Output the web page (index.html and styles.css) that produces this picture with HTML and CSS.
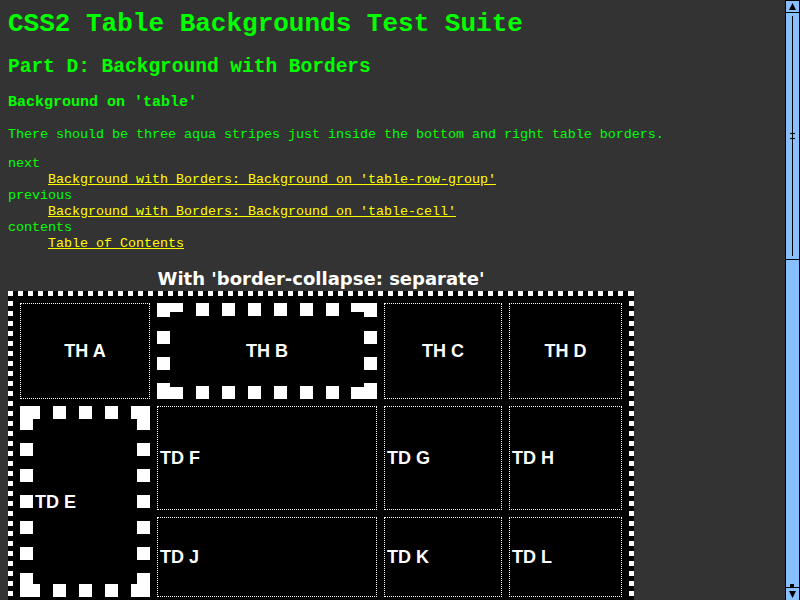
FILE: index.html
```html
<!DOCTYPE html>
<html lang="en">
<head>
<meta charset="utf-8">
<title>CSS2 Table Backgrounds Test Suite: Part D: Background on 'table'</title>
<link rel="stylesheet" href="styles.css">
</head>
<body>
<h1>CSS2 Table Backgrounds Test Suite</h1>
<h2>Part D: Background with Borders</h2>
<h3>Background on 'table'</h3>
<p class="note">There should be three aqua stripes just inside the bottom and right table borders.</p>
<dl class="nav">
  <dt>next</dt>
  <dd><a href="#">Background with Borders: Background on 'table-row-group'</a></dd>
  <dt>previous</dt>
  <dd><a href="#">Background with Borders: Background on 'table-cell'</a></dd>
  <dt>contents</dt>
  <dd><a href="#">Table of Contents</a></dd>
</dl>
<div class="test">
  <div class="caption">With 'border-collapse: separate'</div>
  <div class="grid">
    <div class="cell th">TH A</div>
    <div class="cell th thick-b">TH B</div>
    <div class="cell th">TH C</div>
    <div class="cell th">TH D</div>
    <div class="cell td thick-e">TD E</div>
    <div class="cell td">TD F</div>
    <div class="cell td">TD G</div>
    <div class="cell td">TD H</div>
    <div class="cell td">TD J</div>
    <div class="cell td">TD K</div>
    <div class="cell td">TD L</div>
  </div>
</div>
<div class="scrollbar" aria-hidden="true">
  <div class="sb-btn sb-up"><svg width="13" height="11" viewBox="0 0 13 11"><path d="M6.5 2 L10 9 H3 Z" fill="#000"/></svg></div>
  <div class="sb-thumb"></div>
  <div class="sb-track"></div>
  <div class="sb-btn sb-down"><svg width="13" height="11" viewBox="0 0 13 11"><path d="M3 2 H10 L6.5 9 Z" fill="#000"/></svg></div>
</div>
</body>
</html>
```
FILE: styles.css
```css
html {
  overflow: hidden;
  background: #333333;
}

body {
  margin: 0;
  padding: 9px 8px 0;
  background: #333333;
  color: #00ff00;
  font-family: "Liberation Mono", "Courier New", monospace;
  font-size: 13.33px;
  line-height: 16px;
}

h1 {
  margin: 0;
  font-size: 26px;
  line-height: 30px;
  font-weight: bold;
}

h2 {
  margin: 16px 0 0;
  font-size: 19.5px;
  line-height: 24px;
  font-weight: bold;
}

h3 {
  margin: 15px 0 0;
  font-size: 15px;
  line-height: 18px;
  font-weight: bold;
}

.note {
  margin: 15px 0 0;
}

.nav {
  margin: 13px 0 0;
}

.nav dd {
  margin: 0 0 0 40px;
}

.nav a {
  color: #ffff00;
}

.test {
  width: 626px;
  margin-top: 17px;
  font-family: "Liberation Sans", Arial, sans-serif;
  font-weight: bold;
  font-size: 18px;
  color: #ffffff;
}

.caption {
  font-family: "DejaVu Sans", Verdana, sans-serif;
  text-align: center;
  line-height: 20px;
  margin-bottom: 2px;
}

.grid {
  display: grid;
  grid-template-columns: 130px 220px 118px 113px;
  grid-template-rows: 96px 104px 80px;
  gap: 7px;
  padding: 7px;
  border: 5px solid transparent;
  background-color: #000;
  background-image:
    repeating-linear-gradient(to right, #fff 0 5px, transparent 5px 10px),
    repeating-linear-gradient(to right, #fff 0 5px, transparent 5px 10px),
    repeating-linear-gradient(to bottom, #fff 0 5px, transparent 5px 10px),
    repeating-linear-gradient(to bottom, #fff 0 5px, transparent 5px 10px);
  background-size: 100% 5px, 100% 5px, 5px 100%, 5px 100%;
  background-position: left top, left bottom, left top, right top;
  background-repeat: no-repeat;
  background-origin: border-box;
}

.cell {
  box-sizing: border-box;
  border: 1px dotted #fff;
  background: #000;
  display: flex;
  align-items: center;
  line-height: 20px;
}

.th {
  justify-content: center;
}

.td {
  padding-left: 2px;
}

.thick-b,
.thick-e {
  --w: linear-gradient(#fff, #fff);
  --dh: repeating-linear-gradient(to right, #fff 0 13px, transparent 13px 26px);
  --dv: repeating-linear-gradient(to bottom, #fff 0 13px, transparent 13px 26px);
  border: 13px solid transparent;
  background-color: #000;
  background-origin: border-box;
  background-repeat: no-repeat;
}

.thick-b {
  background-image:
    var(--w), var(--w), var(--dh), var(--w), var(--w),
    var(--dv), var(--dv),
    var(--w), var(--w), var(--dh), var(--w), var(--w);
  background-size:
    26px 9px, 13px 14px, 143px 13px, 26px 9px, 13px 14px,
    13px 39px, 13px 39px,
    13px 16px, 26px 12px, 143px 13px, 13px 16px, 26px 12px;
  background-position:
    left 0 top 0, left 0 top 0, left 39px top 0, right 0 top 0, right 0 top 0,
    left 0 top 28px, right 0 top 28px,
    left 0 top 80px, left 0 bottom 0, left 39px bottom 0, right 0 top 80px, right 0 bottom 0;
}

.thick-e {
  grid-row: span 2;
  background-image:
    var(--w), var(--w), var(--dh), var(--w), var(--w),
    var(--dv), var(--dv),
    var(--w), var(--w), var(--dh), var(--w), var(--w);
  background-size:
    20px 13px, 13px 24px, 65px 13px, 19px 13px, 13px 24px,
    13px 117px, 13px 117px,
    13px 24px, 20px 13px, 65px 13px, 13px 24px, 19px 13px;
  background-position:
    left 0 top 0, left 0 top 0, left 33px top 0, right 0 top 0, right 0 top 0,
    left 0 top 37px, right 0 top 37px,
    left 0 bottom 0, left 0 bottom 0, left 33px bottom 0, right 0 bottom 0, right 0 bottom 0;
}

/* Browser-chrome scrollbar drawn over the page's right edge */
.scrollbar {
  position: fixed;
  top: 0;
  right: 0;
  width: 15px;
  height: 600px;
  box-sizing: border-box;
  border-left: 1px solid #000;
  border-right: 1px solid #000;
  background: #88c0ff;
  display: flex;
  flex-direction: column;
}

.sb-btn {
  box-sizing: border-box;
  height: 13px;
  display: flex;
  justify-content: center;
  align-items: center;
  overflow: hidden;
}

.sb-up {
  border-top: 1px solid #000;
  border-bottom: 1px solid #000;
}

.sb-thumb {
  box-sizing: border-box;
  height: 247px;
  border-bottom: 1px solid #000;
  background-image:
    linear-gradient(#000, #000),
    linear-gradient(#000, #000),
    linear-gradient(#000, #000);
  background-size: 1px 240px, 5px 1px, 5px 1px;
  background-position: 5.5px 3px, 4px 120px, 4px 125px;
  background-repeat: no-repeat;
}

.sb-track {
  flex: 1;
  background-image: linear-gradient(#000, #000);
  background-size: 4px 3px;
  background-position: 4px 100%;
  background-repeat: no-repeat;
}

.sb-down {
  border-top: 1px solid #000;
}
```
